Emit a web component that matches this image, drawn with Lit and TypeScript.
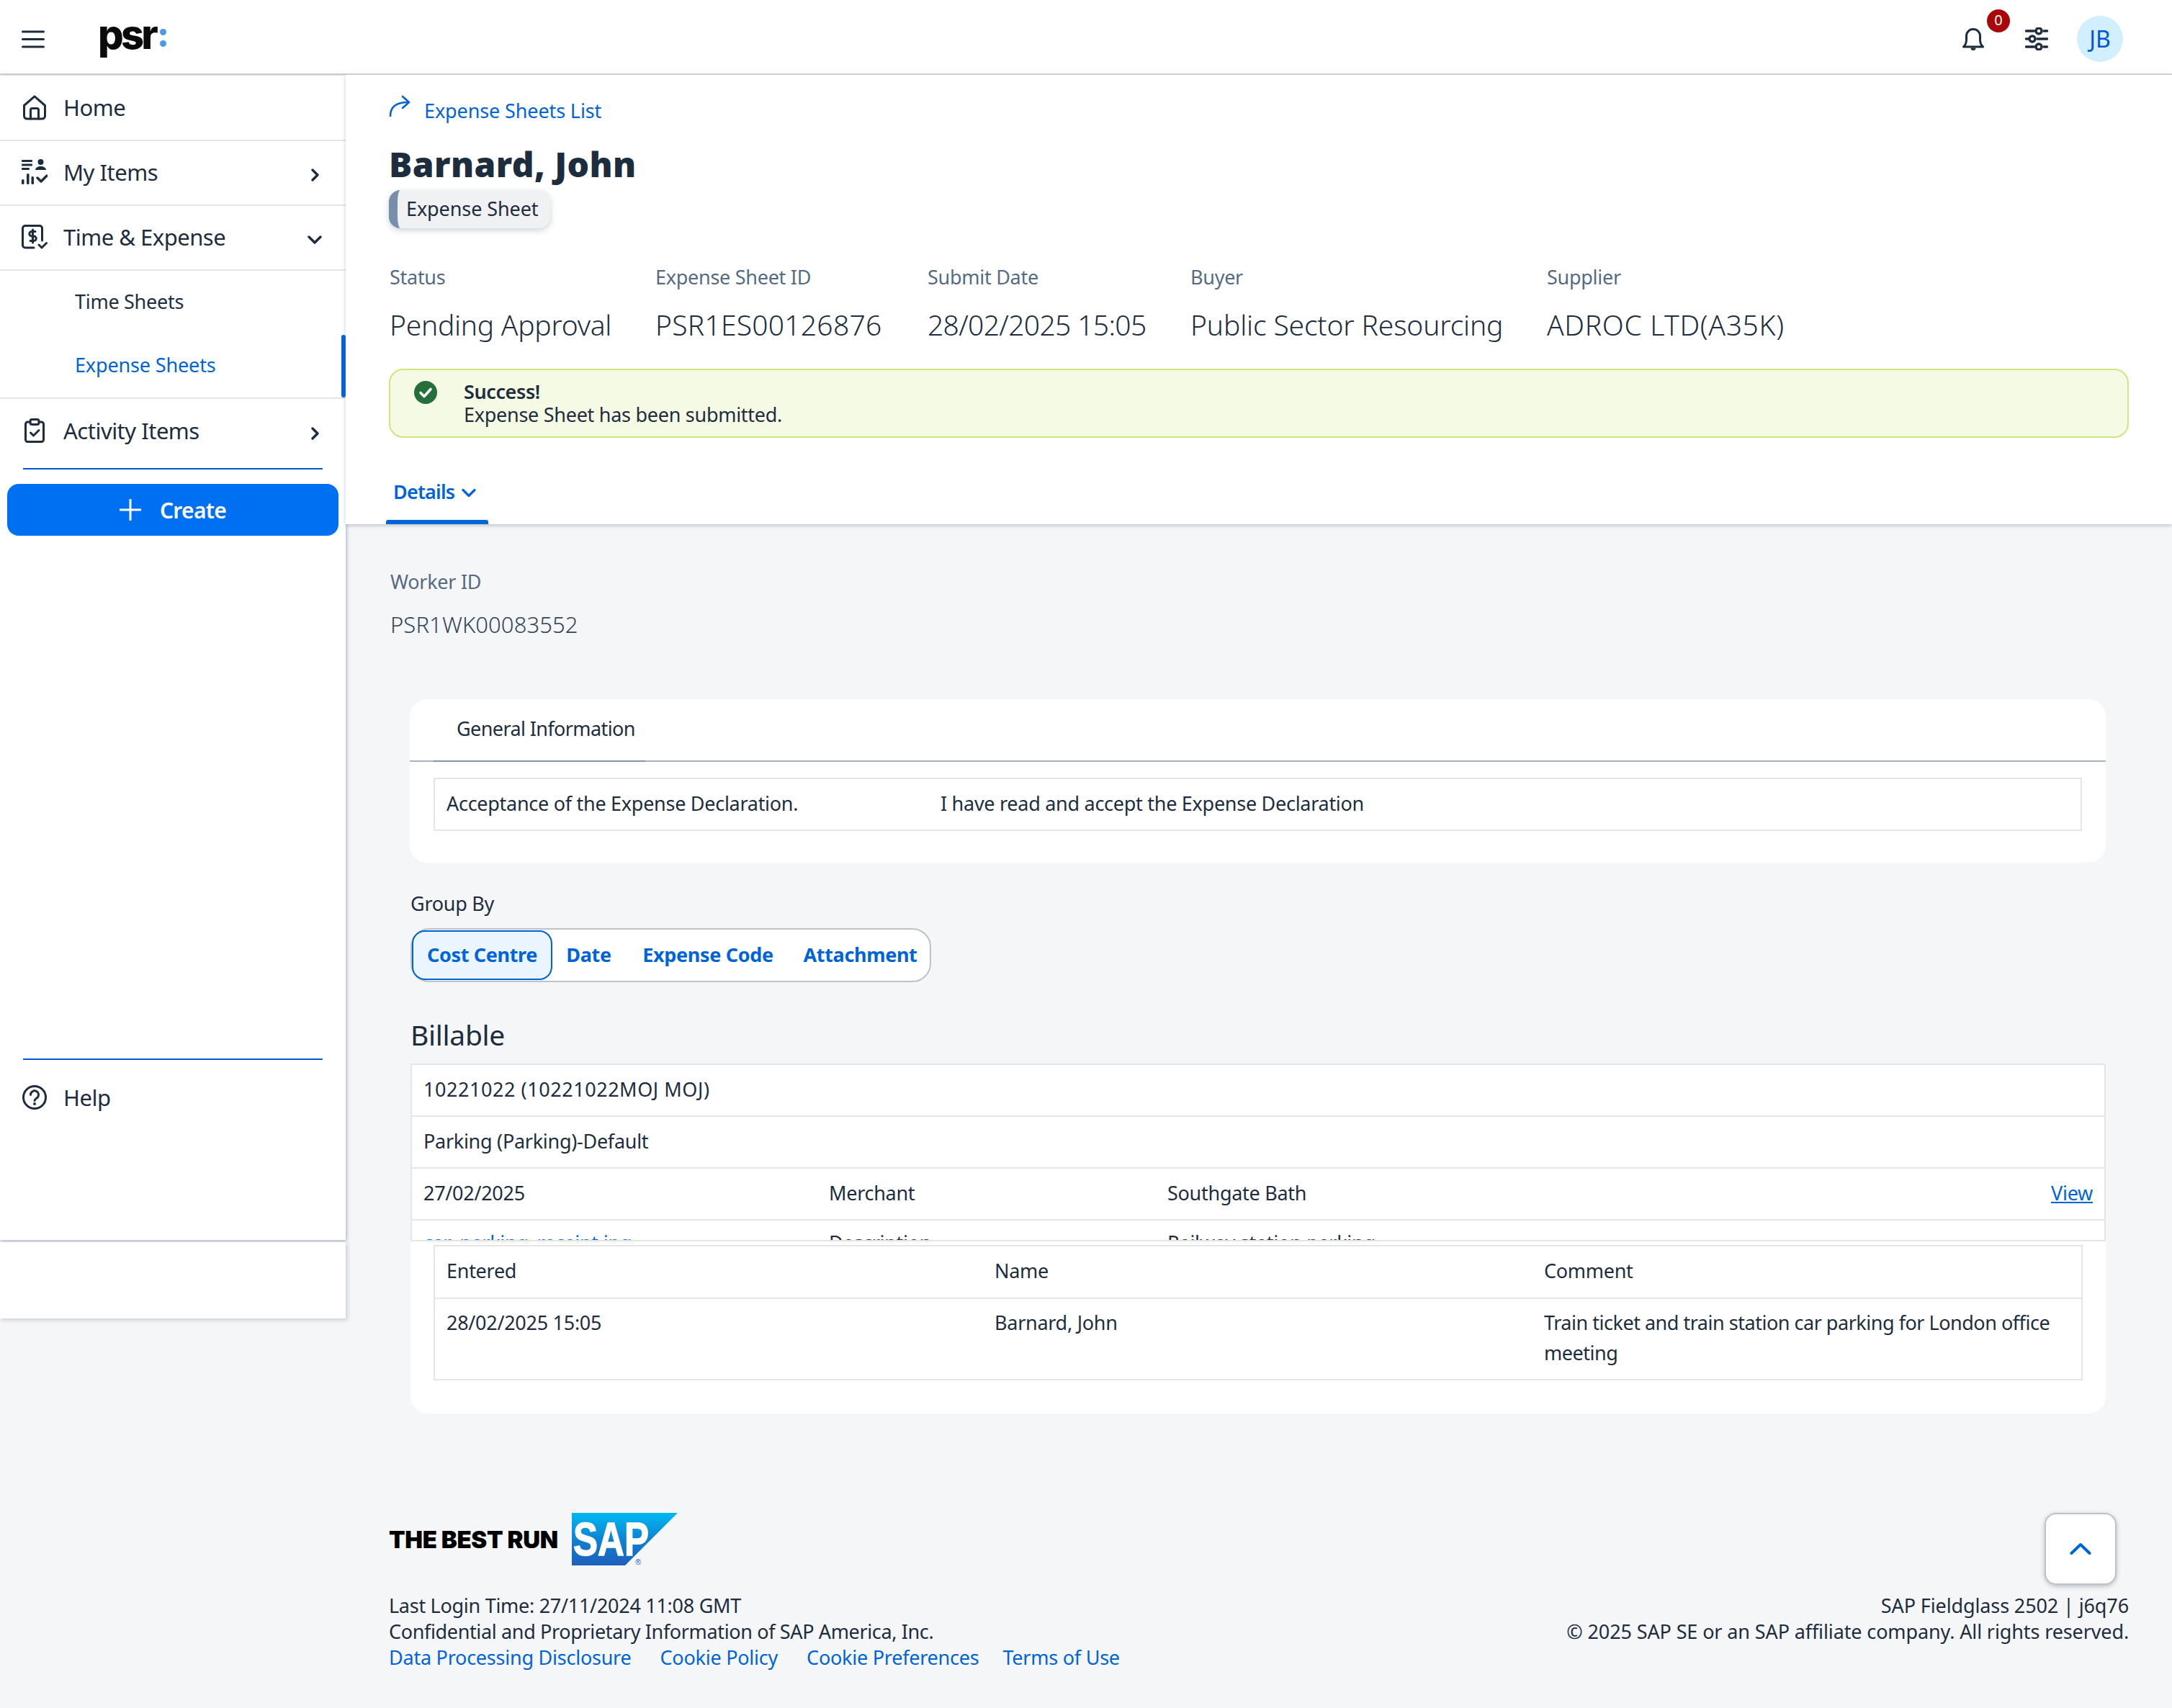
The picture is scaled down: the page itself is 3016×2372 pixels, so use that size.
import { LitElement, css, html } from 'lit';
import { customElement } from 'lit/decorators.js';

@customElement('app-root')
export class AppRoot extends LitElement {
  static override styles = css`
    :host {
      display: block;
      min-height: 2372px;
      background: #f5f6f7;
      color: #1d2d3e;
      font-family: 'Noto Sans', 'Liberation Sans', sans-serif;
      font-size: 27px;
      letter-spacing: -0.28px;
    }
    svg {
      display: block;
      flex: none;
    }
    a {
      color: #0064d9;
      text-decoration: none;
    }
    /* top bar */
    .topbar {
      height: 104px;
      box-sizing: border-box;
      background: #fff;
      border-bottom: 2px solid #d0d4d9;
      display: flex;
      align-items: center;
      padding: 6px 68px 0 30px;
    }
    .logo {
      margin-left: 74px;
      display: flex;
      align-items: center;
      gap: 6px;
      margin-top: -12px;
    }
    .logo b {
      font-family: Inter, sans-serif;
      font-weight: 800;
      font-size: 56px;
      line-height: 50px;
      letter-spacing: -3.8px;
      color: #0a0a0a;
    }
    .logo i {
      display: flex;
      flex-direction: column;
      gap: 7px;
      margin-top: 8px;
    }
    .logo i::before,
    .logo i::after {
      content: '';
      width: 9px;
      height: 9px;
      border-radius: 50%;
      background: #4a9be6;
    }
    .top-actions {
      margin-left: auto;
      display: flex;
      align-items: center;
    }
    .bell {
      position: relative;
    }
    .badge {
      position: absolute;
      left: 34px;
      top: -26px;
      width: 32px;
      height: 32px;
      border-radius: 50%;
      background: #aa0808;
      color: #fff;
      font-size: 20px;
      line-height: 30px;
      text-align: center;
      letter-spacing: 0;
    }
    .sliders {
      margin-left: 57px;
    }
    .avatar {
      margin-left: 40px;
      width: 64px;
      height: 64px;
      border-radius: 50%;
      background: #d1efff;
      color: #0057d2;
      font-size: 32px;
      line-height: 64px;
      text-align: center;
      letter-spacing: 0;
    }
    /* frame */
    .frame {
      display: flex;
      align-items: flex-start;
    }
    .side {
      width: 480px;
      flex: none;
      margin-top: 1px;
    }
    .side-panel {
      background: #fff;
      box-shadow: 2px 0 5px rgba(85, 107, 130, 0.28), 0 2px 4px rgba(85, 107, 130, 0.28);
      height: 1617px;
      box-sizing: border-box;
      padding-top: 1px;
      display: flex;
      flex-direction: column;
    }
    .side-foot {
      background: #fff;
      box-shadow: 2px 2px 6px rgba(85, 107, 130, 0.3);
      height: 106px;
      margin-top: 3px;
    }
    .nav {
      height: 90px;
      flex: none;
      box-sizing: border-box;
      display: flex;
      align-items: center;
      padding: 0 36px 2px 30px;
      border-bottom: 2px solid #e5e5e5;
      font-size: 31px;
      letter-spacing: -0.5px;
    }
    .nav .ico {
      width: 36px;
      display: flex;
      justify-content: center;
    }
    .nav .lbl {
      margin-left: 22px;
    }
    .nav .chev {
      margin-left: auto;
      color: #1d2d3e;
      margin-top: 8px;
    }
    .nav .chev.down {
      margin-right: -3px;
    }
    .nav.activity {
      height: 96px;
      border-bottom: 0;
      padding-bottom: 8px;
    }
    .nav.help {
      height: 104px;
      margin-bottom: 146px;
      border-bottom: 0;
      padding-bottom: 0;
    }
    .sub {
      height: 88px;
      box-sizing: border-box;
      padding: 0 0 3px 104px;
      display: flex;
      align-items: center;
      position: relative;
    }
    .sub.on {
      color: #0064d9;
      letter-spacing: -0.15px;
    }
    .sub.on::after {
      content: '';
      position: absolute;
      right: 0;
      top: 1px;
      bottom: 0;
      width: 6px;
      border-radius: 3px;
      background: #0064d9;
    }
    .sub-wrap {
      border-bottom: 2px solid #e5e5e5;
    }
    .rule {
      height: 2px;
      flex: none;
      background: #0057d2;
      margin: 0 32px;
    }
    .rule.low {
      margin-top: auto;
    }
    .create {
      margin: 20px 10px 0;
      height: 72px;
      flex: none;
      border-radius: 16px;
      background: #0070f2;
      color: #fff;
      display: flex;
      align-items: center;
      justify-content: center;
      gap: 26px;
      font-size: 30px;
      font-weight: 600;
      letter-spacing: -0.7px;
    }
    /* main */
    .main {
      flex: 1;
      min-width: 0;
    }
    .head {
      background: #fff;
      height: 624px;
      box-sizing: border-box;
      padding: 30px 60px 0;
      box-shadow: 0 2px 5px rgba(85, 107, 130, 0.35);
      position: relative;
    }
    .crumb {
      height: 38px;
      display: flex;
      align-items: center;
      gap: 19px;
      color: #0064d9;
      letter-spacing: -0.12px;
    }
    .crumb svg {
      margin-top: -12px;
    }
    h1 {
      margin: 26px 0 0;
      font-size: 48px;
      line-height: 60px;
      font-weight: 900;
      letter-spacing: 0.4px;
    }
    .chip {
      margin-top: 6px;
      width: 224px;
      height: 53px;
      box-sizing: border-box;
      background: #eff1f2;
      border-left: 12px solid #7690aa;
      border-radius: 16px;
      box-shadow: 0 3px 8px rgba(85, 107, 130, 0.3);
      padding-left: 12px;
      line-height: 51px;
      white-space: nowrap;
      letter-spacing: -0.1px;
    }
    .facts {
      margin: 50px 0 0 1px;
      display: flex;
    }
    .fact {
      width: var(--w);
    }
    .fact .k {
      height: 36px;
      line-height: 36px;
      color: #556b82;
    }
    .fact .v {
      margin-top: 20px;
      height: 56px;
      line-height: 56px;
      font-size: 39px;
      font-weight: 300;
      letter-spacing: var(--ls);
      white-space: nowrap;
    }
    .banner {
      margin-top: 33px;
      height: 96px;
      box-sizing: border-box;
      background: #f5fae5;
      border: 2px solid #cee67e;
      border-radius: 20px;
      padding: 14px 0 0 32px;
      display: flex;
      gap: 36px;
      line-height: 32px;
    }
    .banner strong {
      display: block;
      font-weight: 600;
      letter-spacing: -0.4px;
    }
    .tabs {
      position: absolute;
      left: 56px;
      top: 553px;
      height: 71px;
      width: 142px;
      box-sizing: border-box;
      padding: 8px 0 0 10px;
      display: flex;
      align-items: flex-start;
      gap: 10px;
      color: #0064d9;
      font-weight: 600;
      line-height: 36px;
      letter-spacing: -0.8px;
    }
    .tabs svg {
      margin-top: 13px;
    }
    .tabs::after {
      content: '';
      position: absolute;
      left: 0;
      right: 0;
      bottom: 0;
      height: 6px;
      border-radius: 3px 3px 0 0;
      background: #0064d9;
    }
    .body {
      padding: 62px 92px 0 90px;
    }
    .worker {
      margin-left: -28px;
    }
    .worker .k {
      line-height: 36px;
      color: #556b82;
    }
    .worker .v {
      margin-top: 22px;
      line-height: 38px;
      font-size: 31px;
      font-weight: 300;
      letter-spacing: 0.1px;
      color: #32465a;
    }
    .card {
      background: #fff;
      border-radius: 24px;
    }
    .info {
      margin: 85px 0 0 -1px;
      height: 227px;
    }
    .info-tab {
      height: 85px;
      border-bottom: 2px solid #a9b4be;
      padding-left: 65px;
      line-height: 82px;
      position: relative;
      letter-spacing: -0.6px;
    }
    .info-tab::after {
      content: '';
      position: absolute;
      left: 33px;
      width: 294px;
      bottom: -2px;
      height: 2px;
      background: #8396a8;
    }
    .tbl {
      border: 2px solid #e5e5e5;
      background: #fff;
    }
    .row {
      display: grid;
      border-bottom: 2px solid #e5e5e5;
      box-sizing: border-box;
      height: 72px;
      align-items: center;
      padding: 0 0 4px 16px;
      white-space: nowrap;
    }
    .row:last-child {
      border-bottom: 0;
    }
    .info .tbl {
      margin: 22px 33px 0 33px;
      height: 74px;
      box-sizing: border-box;
    }
    .row.decl {
      grid-template-columns: 686px 1fr;
      height: 70px;
    }
    .group-label {
      margin-top: 39px;
      line-height: 36px;
    }
    .seg {
      margin-top: 16px;
      width: 723px;
      height: 75px;
      box-sizing: border-box;
      background: #fff;
      border: 2px solid #bcc3ca;
      border-radius: 26px;
      display: flex;
      align-items: stretch;
      font-weight: 700;
      color: #0064d9;
      letter-spacing: -0.35px;
      padding: 1px 0;
    }
    .seg span {
      display: flex;
      align-items: center;
      justify-content: center;
      box-sizing: border-box;
      width: var(--w);
      padding-bottom: 2px;
      white-space: nowrap;
    }
    .seg .on {
      border: 2px solid #0064d9;
      border-radius: 18px;
      background: #ebf5ff;
    }
    h2 {
      margin: 48px 0 0;
      font-size: 39px;
      line-height: 50px;
      font-weight: 400;
      letter-spacing: -0.3px;
    }
    .lines {
      margin-top: 15px;
      height: 247px;
      box-sizing: border-box;
      overflow: hidden;
    }
    .lines .row {
      padding: 0 16px 3px 16px;
    }
    .lines .row:last-child {
      padding-bottom: 12px;
    }
    .row.code {
      letter-spacing: 0.55px;
    }
    .row.wide {
      grid-template-columns: 563px 470px 1fr auto;
    }
    .view {
      text-decoration: underline;
    }
    .hist {
      height: 239px;
      padding: 5px 32px 0 32px;
      border-radius: 0 0 24px 24px;
      box-sizing: border-box;
    }
    .hist .tbl {
      height: 188px;
      box-sizing: border-box;
    }
    .hist .row {
      grid-template-columns: 761px 763px 1fr;
      height: 73px;
    }
    .hist .row.tall {
      height: 112px;
      align-items: start;
      white-space: normal;
      line-height: 42px;
      padding: 12px 16px 0 16px;
    }
    .comment {
      letter-spacing: -0.48px;
    }
    /* footer */
    .foot {
      margin-top: 138px;
      padding: 0 60px;
      position: relative;
      line-height: 36px;
    }
    .brand {
      display: flex;
      align-items: center;
      gap: 19px;
      height: 73px;
    }
    .brand b {
      font-family: Inter, sans-serif;
      font-weight: 900;
      font-size: 33px;
      letter-spacing: -0.35px;
      color: #000;
      white-space: nowrap;
    }
    .sap-text {
      font-family: 'Liberation Sans', sans-serif;
      font-weight: 700;
      font-size: 64px;
      letter-spacing: 0;
      stroke: #fff;
      stroke-width: 1.4px;
    }
    .sap-reg {
      font-family: 'Liberation Sans', sans-serif;
      font-size: 11px;
      letter-spacing: 0;
    }
    .foot-row {
      margin-top: 38px;
      display: flex;
      justify-content: space-between;
    }
    .conf {
      letter-spacing: -0.36px;
    }
    .links {
      display: flex;
      gap: 40px;
      letter-spacing: -0.24px;
    }
    .links a:last-child {
      margin-left: -7px;
    }
    .legal {
      text-align: right;
      letter-spacing: -0.12px;
    }
    .up {
      position: absolute;
      right: 77px;
      top: 0;
      width: 100px;
      height: 100px;
      box-sizing: border-box;
      background: #fff;
      border: 2px solid #bcc3ca;
      border-radius: 16px;
      box-shadow: 0 2px 6px rgba(85, 107, 130, 0.4);
      display: flex;
      align-items: center;
      justify-content: center;
    }
  `;

  override render() {
    const chevRight = html`<svg class="chev" width="13" height="18" viewBox="0 0 13 18"><path d="M3 2l7 7-7 7" fill="none" stroke="currentColor" stroke-width="3.4" stroke-linecap="round" stroke-linejoin="round"/></svg>`;
    const chevDown = html`<svg class="chev down" width="20" height="14" viewBox="0 0 20 14"><path d="M2 3l8 8 8-8" fill="none" stroke="currentColor" stroke-width="3.4" stroke-linecap="round" stroke-linejoin="round"/></svg>`;

    return html`
      <div class="topbar">
        <svg width="32" height="25" viewBox="0 0 32 25"><path d="M1.500 2h29M1.500 12.500h29M1.500 23h29" stroke="#1d2d3e" stroke-width="3" stroke-linecap="round"/></svg>
        <div class="logo"><b>psr</b><i></i></div>
        <div class="top-actions">
          <div class="bell">
            <svg width="30" height="31" viewBox="0 0 30 31" fill="none" stroke="#1d2d3e" stroke-width="3" stroke-linejoin="round"><path d="M1.500 26c3-2.500 4-5 4-10V11a9.500 9.500 0 0 1 19 0v5c0 5 1 7.500 4 10z"/><path d="M11.500 27.500a3.500 3.500 0 0 0 7 0z" fill="#1d2d3e" stroke="none"/></svg>
            <span class="badge">0</span>
          </div>
          <svg class="sliders" width="32" height="32" viewBox="0 0 32 32" fill="none" stroke="#1d2d3e" stroke-width="3.400" stroke-linecap="round"><path d="M1.500 5h11M26 5h4.500M1.500 16h2.500M17 16h13.500M1.500 27h11M26 27h4.500"/><circle cx="19" cy="5" r="4"/><circle cx="10" cy="16" r="4"/><circle cx="19" cy="27" r="4"/></svg>
          <div class="avatar">JB</div>
        </div>
      </div>

      <div class="frame">
        <aside class="side">
          <div class="side-panel">
            <div class="nav">
              <span class="ico"><svg width="32" height="35" viewBox="0 0 32 35" fill="none" stroke="#1d2d3e" stroke-width="3" stroke-linejoin="round" stroke-linecap="round"><path d="M1.500 14.500L16 1.800l14.500 12.700V29a4 4 0 0 1-4 4h-21a4 4 0 0 1-4-4z"/><path d="M10.500 33V20.500a2 2 0 0 1 2-2h7a2 2 0 0 1 2 2V33"/></svg></span>
              <span class="lbl">Home</span>
            </div>
            <div class="nav">
              <span class="ico"><svg width="36" height="36" viewBox="0 0 36 36" fill="#1d2d3e"><rect x="0" y="1" width="15" height="3" rx="1"/><rect x="0" y="6.500" width="15" height="3" rx="1"/><rect x="0" y="12" width="11" height="3" rx="1"/><circle cx="26.500" cy="4" r="4"/><path d="M19 15c0-3 3.500-5 7.500-5s7.500 2 7.500 5z"/><rect x="0" y="28" width="3.500" height="7" rx="1.500"/><rect x="7" y="20" width="3.500" height="15" rx="1.500"/><rect x="13.500" y="24" width="3.500" height="11" rx="1.500"/><path d="M22 26l5 5 8-8" fill="none" stroke="#1d2d3e" stroke-width="3.400" stroke-linecap="round" stroke-linejoin="round"/></svg></span>
              <span class="lbl">My Items</span>
              ${chevRight}
            </div>
            <div class="nav">
              <span class="ico"><svg width="36" height="34" viewBox="0 0 36 34" fill="none" stroke="#1d2d3e" stroke-width="3" stroke-linecap="round" stroke-linejoin="round"><path d="M17 32H5a3.500 3.500 0 0 1-3.500-3.500V5A3.500 3.500 0 0 1 5 1.500h20A3.500 3.500 0 0 1 28.500 5v17"/><path d="M19 9.500h-5a2.800 2.800 0 0 0 0 6.500h3a2.800 2.800 0 0 1 0 6.500h-5M15.500 7v18"/><path d="M24 28l4 4 6.500-6.500"/></svg></span>
              <span class="lbl">Time &amp; Expense</span>
              ${chevDown}
            </div>
            <div class="sub-wrap">
              <div class="sub">Time Sheets</div>
              <div class="sub on">Expense Sheets</div>
            </div>
            <div class="nav activity">
              <span class="ico"><svg width="28" height="34" viewBox="0 0 28 34" fill="none" stroke="#1d2d3e" stroke-width="3" stroke-linecap="round" stroke-linejoin="round"><path d="M8 5H4.500a3 3 0 0 0-3 3v21.500a3 3 0 0 0 3 3h19a3 3 0 0 0 3-3V8a3 3 0 0 0-3-3H20"/><rect x="8" y="1.500" width="12" height="7" rx="2.500"/><path d="M8.500 20l4 4 7.500-7.500"/></svg></span>
              <span class="lbl">Activity Items</span>
              ${chevRight}
            </div>
            <div class="rule"></div>
            <div class="create">
              <svg width="30" height="30" viewBox="0 0 30 30"><path d="M15 1v28M1 15h28" stroke="#fff" stroke-width="3" stroke-linecap="round"/></svg>
              Create
            </div>
            <div class="rule low"></div>
            <div class="nav help">
              <span class="ico"><svg width="34" height="34" viewBox="0 0 34 34" fill="none" stroke="#1d2d3e" stroke-width="3" stroke-linecap="round"><circle cx="17" cy="17" r="15.500"/><path d="M11.500 13.500a5.500 5.500 0 1 1 8.500 4.500c-1.800 1.200-3 2-3 3.500"/><circle cx="17" cy="26" r="1.200" fill="#1d2d3e" stroke-width="1.500"/></svg></span>
              <span class="lbl">Help</span>
            </div>
          </div>
          <div class="side-foot"></div>
        </aside>

        <div class="main">
          <section class="head">
            <a class="crumb">
              <svg width="30" height="30" viewBox="0 0 30 30" fill="none" stroke="#0064d9" stroke-width="2.600" stroke-linecap="round" stroke-linejoin="round"><path d="M2 29c0-12 7-19 25-19"/><path d="M19 2l9 8-9 8"/></svg>
              Expense Sheets List
            </a>
            <h1>Barnard, John</h1>
            <div class="chip">Expense Sheet</div>
            <div class="facts">
              ${[
                ['Status', 'Pending Approval', 369, -0.27],
                ['Expense Sheet ID', 'PSR1ES00126876', 378, 0.25],
                ['Submit Date', '28/02/2025 15:05', 365, -0.65],
                ['Buyer', 'Public Sector Resourcing', 495, -0.15],
                ['Supplier', 'ADROC LTD(A35K)', 600, 0.65],
              ].map(
                ([k, v, w, ls]) => html`
                  <div class="fact" style="--w:${w}px;--ls:${ls}px">
                    <div class="k">${k}</div>
                    <div class="v">${v}</div>
                  </div>
                `,
              )}
            </div>
            <div class="banner">
              <svg width="34" height="34" viewBox="0 0 34 34"><circle cx="17" cy="17" r="16" fill="#256f3a"/><path d="M10 17.500l5 5 9-10" fill="none" stroke="#fff" stroke-width="3.600" stroke-linecap="round" stroke-linejoin="round"/></svg>
              <div>
                <strong>Success!</strong>
                Expense Sheet has been submitted.
              </div>
            </div>
            <div class="tabs">
              Details
              <svg width="20" height="13" viewBox="0 0 20 13"><path d="M2 2.500l8 8 8-8" fill="none" stroke="#0064d9" stroke-width="3.200" stroke-linecap="round" stroke-linejoin="round"/></svg>
            </div>
          </section>

          <section class="body">
            <div class="worker">
              <div class="k">Worker ID</div>
              <div class="v">PSR1WK00083552</div>
            </div>

            <div class="card info">
              <div class="info-tab">General Information</div>
              <div class="tbl">
                <div class="row decl">
                  <span>Acceptance of the Expense Declaration.</span>
                  <span>I have read and accept the Expense Declaration</span>
                </div>
              </div>
            </div>

            <div class="group-label">Group By</div>
            <div class="seg">
              <span class="on" style="--w:195px">Cost Centre</span>
              <span style="--w:101px">Date</span>
              <span style="--w:230px">Expense Code</span>
              <span style="--w:193px">Attachment</span>
            </div>

            <h2>Billable</h2>
            <div class="tbl lines">
              <div class="row code">10221022 (10221022MOJ MOJ)</div>
              <div class="row">Parking (Parking)-Default</div>
              <div class="row wide">
                <span>27/02/2025</span><span>Merchant</span><span>Southgate Bath</span><a class="view">View</a>
              </div>
              <div class="row wide">
                <a>car_parking_receipt.jpg</a><span>Description</span><span>Railway station parking</span><span></span>
              </div>
            </div>

            <div class="card hist">
              <div class="tbl">
                <div class="row"><span>Entered</span><span>Name</span><span>Comment</span></div>
                <div class="row tall">
                  <span>28/02/2025 15:05</span>
                  <span>Barnard, John</span>
                  <span class="comment">Train ticket and train station car parking for London office meeting</span>
                </div>
              </div>
            </div>
          </section>

          <footer class="foot">
            <div class="brand">
              <b>THE BEST RUN</b>
              <svg width="147" height="73" viewBox="0 0 147 73">
                <defs>
                  <linearGradient id="sapfill" x1="0" y1="0" x2="0" y2="1">
                    <stop offset="0" stop-color="#00b8f1"></stop>
                    <stop offset="0.55" stop-color="#0f7ed0"></stop>
                    <stop offset="1" stop-color="#1e5fbb"></stop>
                  </linearGradient>
                </defs>
                <polygon points="0,0 147,0 74,73 0,73" fill="url(#sapfill)"></polygon>
                <text class="sap-text" x="2" y="59" fill="#fff" textLength="105" lengthAdjust="spacingAndGlyphs">SAP</text>
                <text class="sap-reg" x="88" y="72" fill="#1e5fbb">®</text>
              </svg>
            </div>
            <div class="foot-row">
              <div>
                <div>Last Login Time: 27/11/2024 11:08 GMT</div>
                <div class="conf">Confidential and Proprietary Information of SAP America, Inc.</div>
                <div class="links">
                  <a>Data Processing Disclosure</a>
                  <a>Cookie Policy</a>
                  <a>Cookie Preferences</a>
                  <a>Terms of Use</a>
                </div>
              </div>
              <div class="legal">
                <div>SAP Fieldglass 2502 | j6q76</div>
                <div>© 2025 SAP SE or an SAP affiliate company. All rights reserved.</div>
              </div>
            </div>
            <div class="up">
              <svg width="30" height="20" viewBox="0 0 30 20"><path d="M2.500 16L15 4l12.500 12" fill="none" stroke="#0064d9" stroke-width="4" stroke-linecap="round" stroke-linejoin="round"/></svg>
            </div>
          </footer>
        </div>
      </div>
    `;
  }
}

declare global {
  interface HTMLElementTagNameMap {
    'app-root': AppRoot;
  }
}
